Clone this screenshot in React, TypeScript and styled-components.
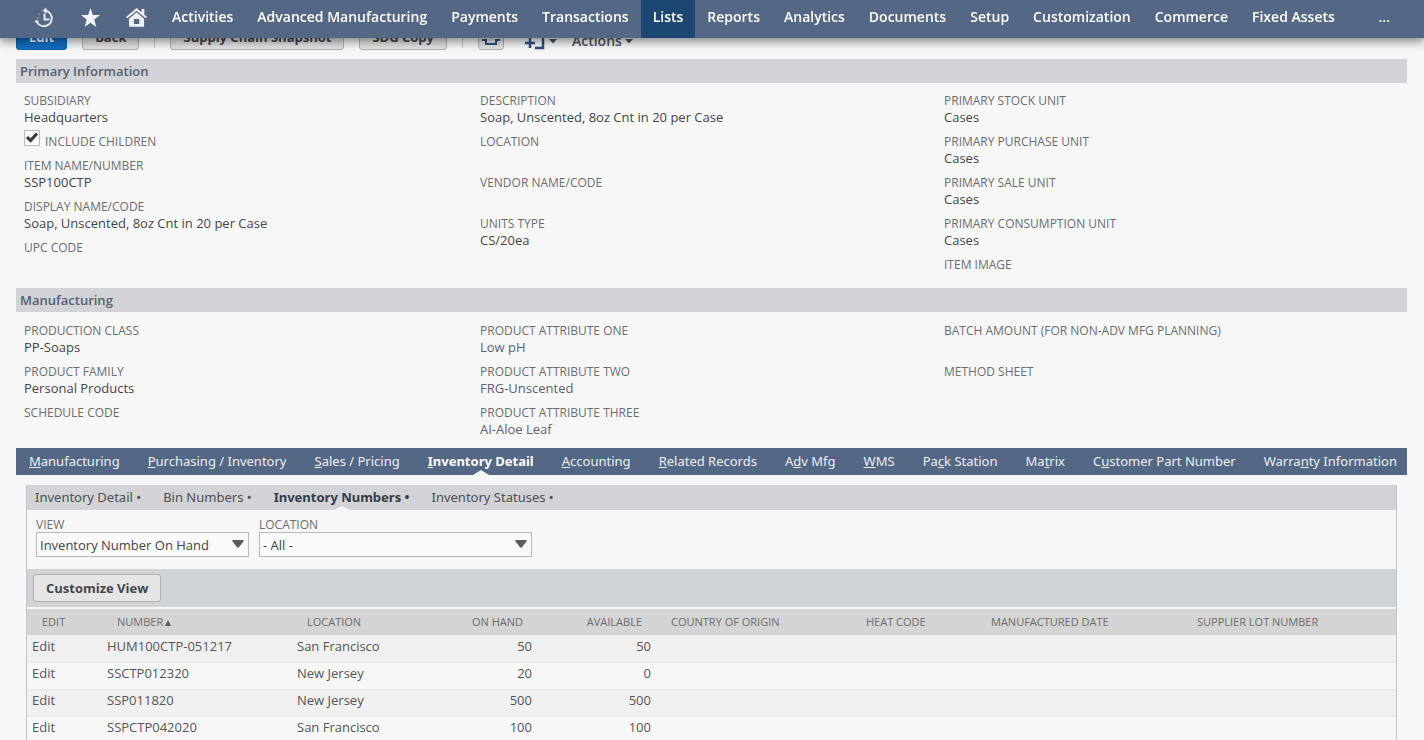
import React from "react";
import styled, { createGlobalStyle } from "styled-components";

const GlobalStyle = createGlobalStyle`
  * { box-sizing: border-box; }
  html { scrollbar-width: none; }
  body {
    margin: 0;
    background: #f7f7f8;
    color: #454547;
    font-family: "Open Sans", "Noto Sans", sans-serif;
    font-size: 13px;
    line-height: 16px;
  }
  button, select, input { font: inherit; color: inherit; }
  a { color: inherit; text-decoration: none; }
`;

const NavBar = styled.nav`
  position: fixed;
  top: 0;
  left: 0;
  right: 0;
  z-index: 10;
  display: flex;
  height: 38px;
  padding-left: 34px;
  background: #546785;
  color: #ffffff;
  font-size: 14px;
  font-weight: 600;
  box-shadow: 0 2px 10px 1px rgba(0, 0, 0, 0.5);
`;

const NavIcons = styled.div`
  display: flex;
  align-items: center;
  gap: 24px;
  width: 126px;
  flex: none;
  padding-bottom: 2px;
`;

const IconLink = styled.a`
  display: flex;
  width: 22px;
  height: 22px;
  flex: none;
`;

const NavItem = styled.a<{ $active?: boolean }>`
  display: flex;
  align-items: center;
  padding: 0 12px 4px;
  white-space: nowrap;
  background: ${(p) => (p.$active ? "#1c4772" : "transparent")};
`;

const NavMore = styled(NavItem)`
  margin-left: auto;
  margin-right: 22px;
`;

const Main = styled.main`
  padding: 24px 17px 0 16px;
`;

const Toolbar = styled.div`
  display: flex;
  align-items: center;
  height: 26px;
  gap: 15px;
  margin-bottom: 9px;
`;

const ToolButton = styled.button<{ $primary?: boolean }>`
  height: 26px;
  padding: 0 12px;
  border: 1px solid ${(p) => (p.$primary ? "#0d62ad" : "#b3b3b5")};
  border-radius: 3px;
  background: ${(p) => (p.$primary ? "#126fc2" : "#e3e3e4")};
  color: ${(p) => (p.$primary ? "#ffffff" : "#454547")};
  font-weight: 700;
  white-space: nowrap;
`;

const IconButton = styled(ToolButton)`
  display: flex;
  align-items: center;
  justify-content: center;
  width: 26px;
  padding: 0;
  margin-right: 6px;
`;

const Divider = styled.span`
  width: 1px;
  height: 22px;
  background: #c4c4c6;
`;

const PlainButton = styled.button`
  display: flex;
  align-items: center;
  gap: 3px;
  height: 26px;
  padding: 8px 0 0;
  border: 0;
  background: none;
  color: #4b5363;
  font-size: 14px;
  font-weight: 600;
`;

const SectionTitle = styled.h2`
  margin: 0;
  padding: 0 4px;
  height: 24px;
  background: #d1d3d7;
  color: #56606e;
  font-size: 13px;
  font-weight: 600;
  line-height: 24px;
`;

const FieldGrid = styled.div<{ $tall?: boolean }>`
  display: grid;
  grid-template-columns: 456fr 464fr 455fr;
  padding: ${(p) => (p.$tall ? "10px" : "11px")} 8px 0;
  height: ${(p) => (p.$tall ? "205px" : "136px")};
`;

const FieldColumn = styled.dl`
  margin: 0;
`;

const Field = styled.div`
  height: 41px;
`;

const FieldLabel = styled.dt`
  color: #6d6d70;
  font-size: 12px;
`;

const FieldValue = styled.dd<{ $muted?: boolean }>`
  margin: 0;
  color: ${(p) => (p.$muted ? "#5d6270" : "#454547")};
`;

const CheckField = styled.label`
  display: flex;
  align-items: center;
  gap: 5px;
  height: 24px;
  color: #6d6d70;
  font-size: 12px;
  padding-bottom: 8px;
`;

const CheckBoxWrap = styled.span`
  position: relative;
  display: flex;
  margin-bottom: 8px;
  svg {
    position: absolute;
    left: 2px;
    top: 2px;
    pointer-events: none;
  }
`;

const CheckBox = styled.input`
  appearance: none;
  width: 16px;
  height: 16px;
  margin: 0;
  border: 1px solid #bdbdbf;
  background: #fafafa;
`;

const TabBar = styled.nav`
  display: flex;
  justify-content: space-between;
  height: 27px;
  padding: 0 10px 0 13px;
  background: #546785;
  color: #eceff5;
  font-family: "Noto Sans", "Open Sans", sans-serif;
  white-space: nowrap;
`;

const Tab = styled.a<{ $active?: boolean }>`
  position: relative;
  display: block;
  line-height: 27px;
  font-weight: ${(p) => (p.$active ? 700 : 400)};
  color: ${(p) => (p.$active ? "#ffffff" : "inherit")};
`;

const Notch = styled.svg`
  position: absolute;
  left: calc(50% - 8px);
  bottom: 0;
  fill: #f7f7f8;
`;

const Panel = styled.section`
  margin: 10px 10px 0;
  border: 1px solid #c3c4c7;
  border-top: 0;
`;

const SubTabs = styled.nav`
  display: flex;
  gap: 22px;
  height: 25px;
  padding: 0 8px;
  background: #d1d3d7;
  color: #4f4f53;
  font-family: "Noto Sans", "Open Sans", sans-serif;
  white-space: nowrap;
`;

const SubTab = styled.a<{ $active?: boolean }>`
  position: relative;
  line-height: 25px;
  font-weight: ${(p) => (p.$active ? 700 : 400)};
  color: ${(p) => (p.$active ? "#333c4a" : "inherit")};
`;

const Filters = styled.div`
  display: flex;
  gap: 10px;
  height: 59px;
  padding: 7px 9px 0;
`;

const Filter = styled.div<{ $wide?: boolean }>`
  width: ${(p) => (p.$wide ? "273px" : "213px")};
`;

const FilterLabel = styled.label`
  display: block;
  color: #6d6d70;
  font-size: 12px;
  line-height: 15px;
`;

const SelectWrap = styled.div`
  position: relative;
  svg {
    position: absolute;
    right: 5px;
    top: 8px;
    fill: #5b5b5f;
    pointer-events: none;
  }
`;

const Select = styled.select`
  display: block;
  appearance: none;
  width: 100%;
  height: 25px;
  padding: 0 3px;
  border: 1px solid #b9b9bc;
  border-radius: 0;
  background: #fafafa;
`;

const ActionStrip = styled.div`
  display: flex;
  align-items: center;
  height: 38px;
  padding: 0 6px;
  background: #d0d3d6;
`;

const CustomizeButton = styled.button`
  height: 28px;
  padding: 0 12px;
  border: 1px solid #aeaeb1;
  border-radius: 3px;
  background: #e5e5e6;
  font-weight: 700;
`;

const DataTable = styled.table`
  width: 100%;
  margin-top: 2px;
  border-collapse: collapse;
  table-layout: fixed;
`;

const HeadCell = styled.th<{ $right?: boolean }>`
  height: 26px;
  padding: 0 14px 0 15px;
  background: #d4d4d4;
  color: #6d6d6d;
  font-size: 11px;
  font-weight: 400;
  text-align: ${(p) => (p.$right ? "right" : "left")};
  white-space: nowrap;
  svg { margin-left: 2px; fill: #5b5b5f; }
`;

const Row = styled.tr`
  border-bottom: 1px solid #e6e6e7;
  &:nth-child(odd) { background: #f0f0f1; }
`;

const Cell = styled.td<{ $right?: boolean }>`
  height: 27px;
  padding: 0 5px 5px;
  color: #555558;
  text-align: ${(p) => (p.$right ? "right" : "left")};
`;

const HistoryIcon = () => (
  <svg width="22" height="22" viewBox="0 0 22 22" fill="none" stroke="#e8ebf2" strokeWidth="2">
    <path d="M11.500 3.700a7.800 7.800 0 1 1-9 10" />
    <path d="M1 14.500h3.500" />
    <path d="M3.600 12a8 8 0 0 1 4.400-7.200" strokeDasharray="2 2" strokeWidth="1.500" opacity="0.3" />
    <path d="M10.500 6.500v6h5" />
    <path d="M12.500 0.500v6.200L8.500 3.600z" fill="#e8ebf2" stroke="none" />
  </svg>
);

const StarIcon = () => (
  <svg width="22" height="22" viewBox="0 0 22 22" fill="#f4f6fa">
    <path d="M10.500 1l2.300 7 7.200.1-5.700 4.400 2 7.500-5.800-4.300L4.700 20l2-7.500L1 8.100 8.200 8z" />
  </svg>
);

const HomeIcon = () => (
  <svg width="24" height="22" viewBox="0 0 24 22" fill="#eef1f6">
    <path d="M11.500 0L0 9.800l1.700 1.600L11.500 3l9.800 8.400L23 9.800l-3-2.500V1.200h-3v3.600z" />
    <path fillRule="evenodd" d="M11.500 4.700L3.300 11.800V20.500h16.400v-8.700zM8.600 12h5.900v5.600H8.600z" />
  </svg>
);

const Caret = ({ width = 8 }: { width?: number }) => (
  <svg width={width} height="5" viewBox="0 0 8 5" fill="currentColor">
    <path d="M0 0h8L4 4.500z" />
  </svg>
);

const SelectArrow = () => (
  <svg width="12" height="8" viewBox="0 0 12 8">
    <path d="M1 0h10q1 0 .6 1.300L7 7.300q-1 .8-2 0L.4 1.300Q0 0 1 0z" />
  </svg>
);

const navItems = [
  "Activities", "Advanced Manufacturing", "Payments", "Transactions", "Lists", "Reports",
  "Analytics", "Documents", "Setup", "Customization", "Commerce", "Fixed Assets",
];

type FieldData = { label: string; value?: string; check?: boolean; muted?: boolean };

const primary: FieldData[][] = [
  [
    { label: "SUBSIDIARY", value: "Headquarters" },
    { label: "INCLUDE CHILDREN", check: true },
    { label: "ITEM NAME/NUMBER", value: "SSP100CTP" },
    { label: "DISPLAY NAME/CODE", value: "Soap, Unscented, 8oz Cnt in 20 per Case" },
    { label: "UPC CODE" },
  ],
  [
    { label: "DESCRIPTION", value: "Soap, Unscented, 8oz Cnt in 20 per Case" },
    { label: "LOCATION" },
    { label: "VENDOR NAME/CODE" },
    { label: "UNITS TYPE", value: "CS/20ea" },
  ],
  [
    { label: "PRIMARY STOCK UNIT", value: "Cases" },
    { label: "PRIMARY PURCHASE UNIT", value: "Cases" },
    { label: "PRIMARY SALE UNIT", value: "Cases" },
    { label: "PRIMARY CONSUMPTION UNIT", value: "Cases" },
    { label: "ITEM IMAGE" },
  ],
];

const manufacturing: FieldData[][] = [
  [
    { label: "PRODUCTION CLASS", value: "PP-Soaps" },
    { label: "PRODUCT FAMILY", value: "Personal Products" },
    { label: "SCHEDULE CODE" },
  ],
  [
    { label: "PRODUCT ATTRIBUTE ONE", value: "Low pH", muted: true },
    { label: "PRODUCT ATTRIBUTE TWO", value: "FRG-Unscented", muted: true },
    { label: "PRODUCT ATTRIBUTE THREE", value: "AI-Aloe Leaf", muted: true },
  ],
  [{ label: "BATCH AMOUNT (FOR NON-ADV MFG PLANNING)" }, { label: "METHOD SHEET" }],
];

const tabs: [string, string, string][] = [
  ["", "M", "anufacturing"],
  ["", "P", "urchasing / Inventory"],
  ["", "S", "ales / Pricing"],
  ["", "I", "nventory Detail"],
  ["", "A", "ccounting"],
  ["", "R", "elated Records"],
  ["A", "d", "v Mfg"],
  ["", "W", "MS"],
  ["Pa", "c", "k Station"],
  ["Ma", "t", "rix"],
  ["C", "u", "stomer Part Number"],
  ["Warra", "n", "ty Information"],
];

const subTabs = ["Inventory Detail", "Bin Numbers", "Inventory Numbers", "Inventory Statuses"];

const columns = [
  { label: "EDIT", width: 75 },
  { label: "NUMBER", width: 190, sorted: true },
  { label: "LOCATION", width: 160 },
  { label: "ON HAND", width: 85, right: true },
  { label: "AVAILABLE", width: 119, right: true },
  { label: "COUNTRY OF ORIGIN", width: 195 },
  { label: "HEAT CODE", width: 125 },
  { label: "MANUFACTURED DATE", width: 206 },
  { label: "SUPPLIER LOT NUMBER" },
];

const rows = [
  ["HUM100CTP-051217", "San Francisco", 50, 50],
  ["SSCTP012320", "New Jersey", 20, 0],
  ["SSP011820", "New Jersey", 500, 500],
  ["SSPCTP042020", "San Francisco", 100, 100],
];

const Fields = ({ data, tall }: { data: FieldData[][]; tall?: boolean }) => (
  <FieldGrid $tall={tall}>
    {data.map((col, i) => (
      <FieldColumn key={i}>
        {col.map((f) =>
          f.check ? (
            <CheckField key={f.label}>
              <CheckBoxWrap>
                <CheckBox type="checkbox" defaultChecked />
                <svg width="12" height="11" viewBox="0 0 12 11" fill="none" stroke="#39393b" strokeWidth="3">
                  <path d="M1 5l3.500 3.500L11 1.500" />
                </svg>
              </CheckBoxWrap>
              {f.label}
            </CheckField>
          ) : (
            <Field key={f.label}>
              <FieldLabel>{f.label}</FieldLabel>
              {f.value && <FieldValue $muted={f.muted}>{f.value}</FieldValue>}
            </Field>
          )
        )}
      </FieldColumn>
    ))}
  </FieldGrid>
);

export default function App() {
  return (
    <>
      <GlobalStyle />
      <NavBar>
        <NavIcons>
          <IconLink href="#recent" aria-label="Recent records"><HistoryIcon /></IconLink>
          <IconLink href="#shortcuts" aria-label="Shortcuts"><StarIcon /></IconLink>
          <IconLink href="#home" aria-label="Home"><HomeIcon /></IconLink>
        </NavIcons>
        {navItems.map((n) => (
          <NavItem key={n} href="#menu" $active={n === "Lists"}>{n}</NavItem>
        ))}
        <NavMore href="#more">...</NavMore>
      </NavBar>
      <Main>
        <Toolbar>
          <ToolButton $primary>Edit</ToolButton>
          <ToolButton>Back</ToolButton>
          <Divider />
          <ToolButton>Supply Chain Snapshot</ToolButton>
          <ToolButton>SDG Copy</ToolButton>
          <Divider />
          <IconButton aria-label="Print">
            <svg width="20" height="20" viewBox="0 0 20 20" fill="none" stroke="#2d527f" strokeWidth="2">
              <path d="M5 8V2h10v6M1 13h4v4h10v-4h4" />
            </svg>
          </IconButton>
          <PlainButton aria-label="Add">
            <svg width="21" height="18" viewBox="0 0 21 18" fill="none" stroke="#2d527f" strokeWidth="2.500">
              <path d="M0 11h10M5 6v10M9 2h9v14h-8" />
            </svg>
            <Caret />
          </PlainButton>
          <PlainButton>Actions <Caret /></PlainButton>
        </Toolbar>
        <SectionTitle>Primary Information</SectionTitle>
        <Fields data={primary} tall />
        <SectionTitle>Manufacturing</SectionTitle>
        <Fields data={manufacturing} />
        <TabBar>
          {tabs.map(([a, k, b]) => (
            <Tab key={k + b} href="#tab" $active={k === "I"}>
              {a}<u>{k}</u>{b}
              {k === "I" && (
                <Notch width="16" height="5" viewBox="0 0 16 5"><path d="M0 5L8 0l8 5z" /></Notch>
              )}
            </Tab>
          ))}
        </TabBar>
        <Panel>
          <SubTabs>
            {subTabs.map((t, i) => (
              <SubTab key={t} href="#subtab" $active={i === 2}>
                {t} •
                {i === 2 && (
                  <Notch width="16" height="4" viewBox="0 0 16 4"><path d="M0 4L8 0l8 4z" /></Notch>
                )}
              </SubTab>
            ))}
          </SubTabs>
          <Filters>
            <Filter>
              <FilterLabel htmlFor="view">VIEW</FilterLabel>
              <SelectWrap>
                <Select id="view"><option>Inventory Number On Hand</option></Select>
                <SelectArrow />
              </SelectWrap>
            </Filter>
            <Filter $wide>
              <FilterLabel htmlFor="location">LOCATION</FilterLabel>
              <SelectWrap>
                <Select id="location"><option>- All -</option></Select>
                <SelectArrow />
              </SelectWrap>
            </Filter>
          </Filters>
          <ActionStrip>
            <CustomizeButton>Customize View</CustomizeButton>
          </ActionStrip>
          <DataTable>
            <colgroup>
              {columns.map((c) => <col key={c.label} width={c.width} />)}
            </colgroup>
            <thead>
              <tr>
                {columns.map((c) => (
                  <HeadCell key={c.label} $right={c.right}>
                    {c.label}
                    {c.sorted && (
                      <svg width="6" height="6" viewBox="0 0 6 6"><path d="M0 6L3 0l3 6z" /></svg>
                    )}
                  </HeadCell>
                ))}
              </tr>
            </thead>
            <tbody>
              {rows.map((r) => (
                <Row key={r[0]}>
                  <Cell><a href="#edit">Edit</a></Cell>
                  <Cell>{r[0]}</Cell>
                  <Cell>{r[1]}</Cell>
                  <Cell $right>{r[2]}</Cell>
                  <Cell $right>{r[3]}</Cell>
                  <Cell colSpan={4} />
                </Row>
              ))}
            </tbody>
          </DataTable>
        </Panel>
      </Main>
    </>
  );
}
